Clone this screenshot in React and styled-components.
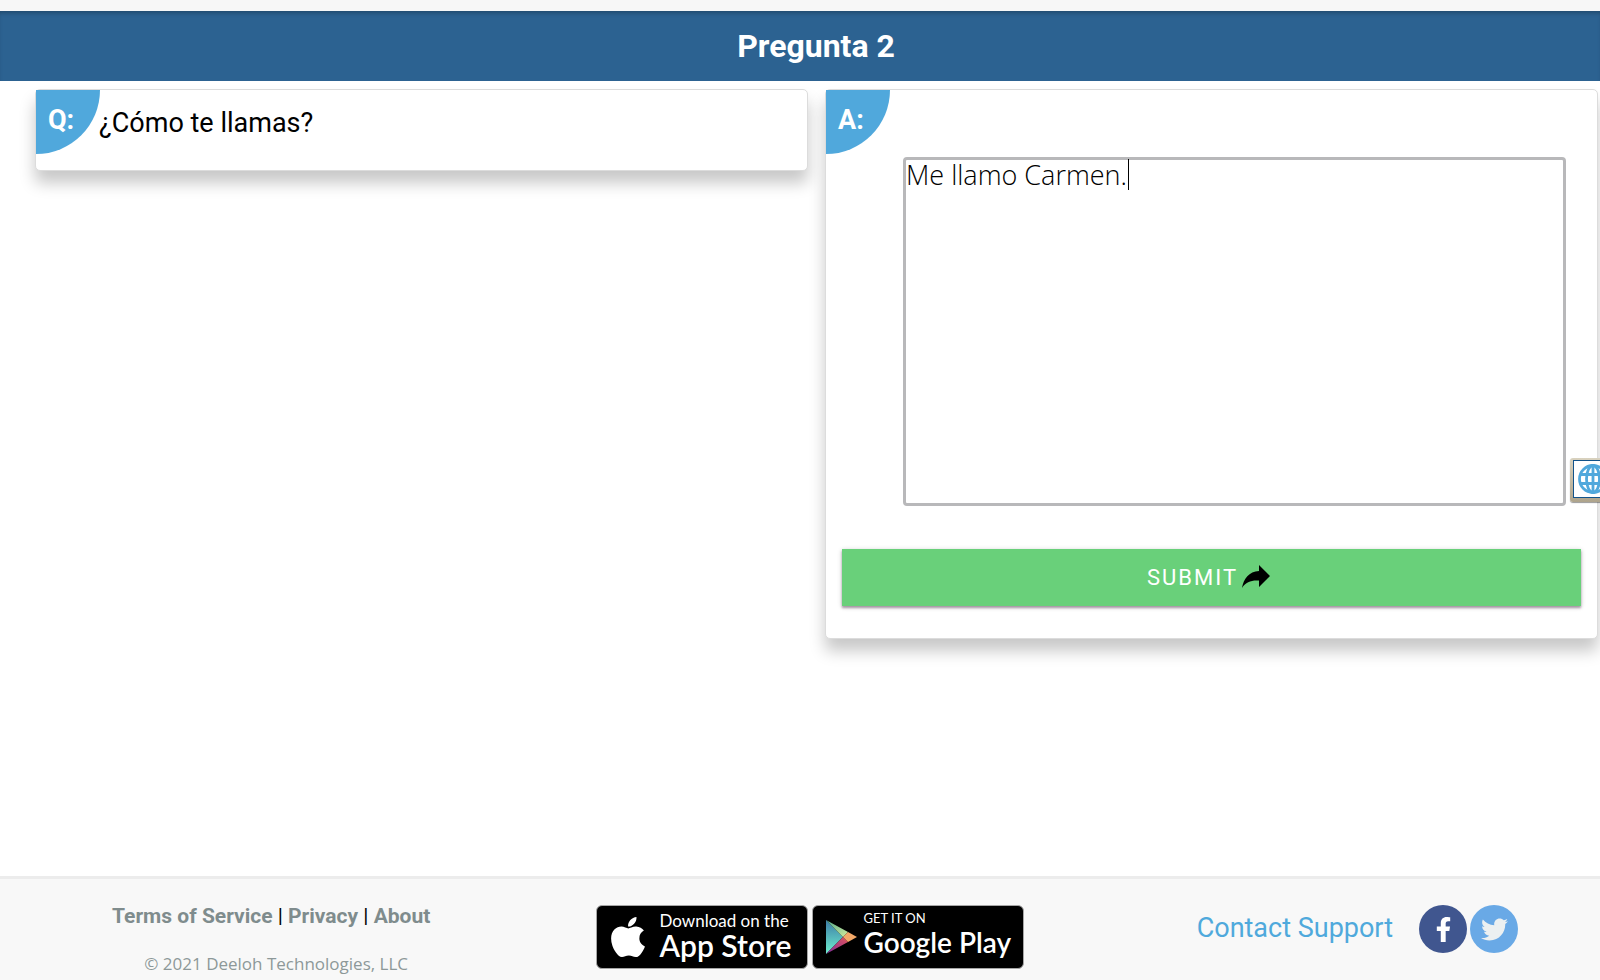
import { useCallback, useState } from 'react'
import styled, { createGlobalStyle } from 'styled-components'
import { FaApple, FaFacebookF, FaTwitter } from 'react-icons/fa'

const GlobalStyle = createGlobalStyle`
  * {
    box-sizing: border-box;
  }

  body {
    margin: 0;
    background: #fff;
    color: #000;
    font-family: Roboto, sans-serif;
    overflow-x: hidden;
  }
`

const Page = styled.div`
  display: flex;
  flex-direction: column;
  min-height: 100vh;
  overflow-x: hidden;
`

const TopStrip = styled.div`
  height: 11px;
  background: #f7f7f7;
`

const Header = styled.header`
  padding: 17px 0 17px 32px;
  background: #2c6291;
  box-shadow: inset 0 4px 4px -2px rgba(0, 0, 0, 0.25);
`

const Title = styled.h1`
  margin: 0;
  color: #fff;
  font-size: 32px;
  line-height: 36px;
  font-weight: 700;
  text-align: center;
`

const Main = styled.main`
  flex: 1;
  display: grid;
  grid-template-columns: 1fr 1fr;
  align-items: start;
  gap: 17px;
  padding: 8px 2px 32px 35px;
`

const Card = styled.section`
  position: relative;
  min-height: 82px;
  border: 1px solid #dcdcdc;
  border-radius: 5px;
  background: #fff;
  box-shadow: 0 12px 16px rgba(0, 0, 0, 0.22);
`

const Corner = styled.div`
  position: absolute;
  top: 0;
  left: 0;
  width: 64px;
  height: 64px;
  padding: 13px 0 0 12px;
  border-bottom-right-radius: 100%;
  background: #50a8dc;
  color: #fff;
  font-size: 27px;
  line-height: 34px;
  font-weight: 700;
`

const Question = styled.p`
  margin: 0;
  padding: 17px 16px 16px 63px;
  font-size: 27px;
  line-height: 32px;
`

const AnswerForm = styled.form`
  padding: 67px 16px 32px;
`

const AnswerField = styled.div`
  position: relative;
  margin: 0 15px 43px 61px;
`

const AnswerInput = styled.textarea`
  display: block;
  width: 100%;
  height: 349px;
  padding: 0;
  border: 3px solid #b8b8ba;
  border-radius: 4px;
  outline: none;
  resize: none;
  background: #fff;
  color: #000;
  font-family: 'Open Sans', sans-serif;
  font-size: 27px;
  line-height: 29px;
  font-weight: 300;
`

const Caret = styled.span`
  position: absolute;
  top: 2px;
  left: 225px;
  width: 1px;
  height: 31px;
  background: #000;
`

const LanguageButton = styled.button`
  position: absolute;
  right: -50px;
  bottom: 4px;
  display: flex;
  align-items: center;
  justify-content: center;
  width: 46px;
  height: 44px;
  padding: 0 0 3px;
  border: 0;
  border-radius: 3px;
  background: linear-gradient(#d9d2bf, #aea48c);
  box-shadow: 0 1px 1px rgba(0, 0, 0, 0.4);
`

const LanguageFace = styled.span`
  display: flex;
  align-items: center;
  justify-content: center;
  width: 40px;
  height: 38px;
  border: 1px solid #12538a;
  background: #fff;
`

const SubmitButton = styled.button`
  display: flex;
  align-items: center;
  justify-content: center;
  gap: 4px;
  width: 100%;
  height: 57px;
  padding: 0 6px 0 0;
  border: 0;
  background: #69d07a;
  box-shadow: 0 2px 2px rgba(110, 80, 105, 0.5), 0 1px 5px rgba(0, 0, 0, 0.2);
  color: #fff;
  font-family: Roboto, sans-serif;
  font-size: 22px;
  letter-spacing: 2px;
`

const Footer = styled.footer`
  display: flex;
  align-items: flex-start;
  justify-content: space-between;
  padding: 26px 82px 4px 112px;
  border-top: 3px solid #ececec;
  background: #f8f8f8;
`

const Legal = styled.div`
  text-align: center;
  font-size: 21px;
  line-height: 22px;
`

const LegalLink = styled.a`
  color: #7f8c8d;
  font-weight: 700;
  text-decoration: none;
`

const Copyright = styled.p`
  margin: 25px 0 0;
  padding-left: 10px;
  color: #8d9899;
  font-family: 'Open Sans', sans-serif;
  font-size: 17px;
  line-height: 24px;
`

const Stores = styled.div`
  display: flex;
  gap: 4px;
  margin-right: 6px;
`

const StoreLink = styled.a`
  display: flex;
  align-items: center;
  gap: ${({ $gap }) => $gap}px;
  width: 212px;
  height: 64px;
  padding-left: 8px;
  border: 1px solid #a6a6a6;
  border-radius: 6px;
  background: #000;
  color: #fff;
  font-family: Lato, sans-serif;
  text-decoration: none;
  white-space: nowrap;
`

const StoreText = styled.span`
  display: flex;
  flex-direction: column;
  padding-bottom: ${({ $lift }) => $lift}px;
`

const StoreHint = styled.span`
  font-size: ${({ $size }) => $size}px;
  line-height: 18px;
`

const StoreName = styled.span`
  font-size: ${({ $size }) => $size}px;
  line-height: 30px;
  font-weight: 600;
`

const Contact = styled.div`
  display: flex;
  align-items: center;
  gap: 3px;
`

const ContactLink = styled.a`
  margin: 0 23px 3px 0;
  color: #4fa9dc;
  font-size: 27px;
  line-height: 36px;
  text-decoration: none;
`

const SocialLink = styled.a`
  display: flex;
  align-items: center;
  justify-content: center;
  width: 48px;
  height: 48px;
  border-radius: 50%;
  background: ${({ $color }) => $color};
  color: ${({ $ink }) => $ink};
`

const ShareIcon = () => (
  <svg width="28" height="26" viewBox="0 0 28 26" aria-hidden="true">
    <path d="M17 0 L28 11 L17 22 V15.500 C9.500 15 4 16.500 0 23 C1.500 14 7 6.500 17 6 Z" />
  </svg>
)

const GlobeIcon = () => (
  <svg
    width="30"
    height="30"
    viewBox="0 0 30 30"
    fill="none"
    stroke="#50a8dc"
    strokeWidth="2.8"
    aria-hidden="true"
  >
    <circle cx="15" cy="15" r="13.500" />
    <ellipse cx="15" cy="15" rx="6.500" ry="13.500" />
    <path d="M15 1.500 V28.500 M3 10.500 H27 M3 19.500 H27" />
  </svg>
)

const PlayIcon = () => (
  <svg width="37" height="36" viewBox="-4 0 37 36" aria-hidden="true">
    <defs>
      <linearGradient id="playBlue" x1="0" y1="0" x2="0" y2="1">
        <stop offset="0" stopColor="#3c7ba6" />
        <stop offset="1" stopColor="#6ff0cf" />
      </linearGradient>
      <linearGradient id="playGreen" x1="0" y1="0" x2="1" y2="1">
        <stop offset="0" stopColor="#4fa98b" />
        <stop offset="1" stopColor="#d3ec9c" />
      </linearGradient>
      <linearGradient id="playRed" x1="0" y1="1" x2="1" y2="0">
        <stop offset="0" stopColor="#7a2a9c" />
        <stop offset="1" stopColor="#e2545c" />
      </linearGradient>
    </defs>
    <path d="M1 1 L18 18 L1 35 Z" fill="url(#playBlue)" />
    <path d="M1 1 L23 13 L18 18 Z" fill="url(#playGreen)" />
    <path d="M1 35 L18 18 L23 23 Z" fill="url(#playRed)" />
    <path d="M23 13 L32 18 L23 23 L18 18 Z" fill="#f3a868" />
  </svg>
)

const App = () => {
  const [answer, setAnswer] = useState('Me llamo Carmen.')

  const handleChange = useCallback((event) => {
    setAnswer(event.target.value)
  }, [])

  const handleSubmit = useCallback((event) => {
    event.preventDefault()
  }, [])

  return (
    <Page>
      <GlobalStyle />
      <TopStrip />
      <Header>
        <Title>Pregunta 2</Title>
      </Header>
      <Main>
        <Card>
          <Corner>Q:</Corner>
          <Question>¿Cómo te llamas?</Question>
        </Card>
        <Card>
          <Corner as="label" htmlFor="answer">
            A:
          </Corner>
          <AnswerForm onSubmit={handleSubmit}>
            <AnswerField>
              <AnswerInput
                id="answer"
                value={answer}
                onChange={handleChange}
                spellCheck={false}
              />
              <Caret />
              <LanguageButton type="button" aria-label="Idioma">
                <LanguageFace>
                  <GlobeIcon />
                </LanguageFace>
              </LanguageButton>
            </AnswerField>
            <SubmitButton type="submit">
              SUBMIT
              <ShareIcon />
            </SubmitButton>
          </AnswerForm>
        </Card>
      </Main>
      <Footer>
        <Legal>
          <LegalLink href="#terms">Terms of Service</LegalLink> |{' '}
          <LegalLink href="#privacy">Privacy</LegalLink> |{' '}
          <LegalLink href="#about">About</LegalLink>
          <Copyright>© 2021 Deeloh Technologies, LLC</Copyright>
        </Legal>
        <Stores>
          <StoreLink href="#app-store" $gap={8}>
            <FaApple size={46} />
            <StoreText $lift={2}>
              <StoreHint $size={17}>Download on the</StoreHint>
              <StoreName $size={30}>App Store</StoreName>
            </StoreText>
          </StoreLink>
          <StoreLink href="#google-play" $gap={5}>
            <PlayIcon />
            <StoreText $lift={9}>
              <StoreHint $size={13}>GET IT ON</StoreHint>
              <StoreName $size={28}>Google Play</StoreName>
            </StoreText>
          </StoreLink>
        </Stores>
        <Contact>
          <ContactLink href="#contact">Contact Support</ContactLink>
          <SocialLink
            href="#facebook"
            aria-label="Facebook"
            $color="#40568f"
            $ink="#fff"
          >
            <FaFacebookF size={25} />
          </SocialLink>
          <SocialLink
            href="#twitter"
            aria-label="Twitter"
            $color="#69a9e6"
            $ink="#ecf0f1"
          >
            <FaTwitter size={27} />
          </SocialLink>
        </Contact>
      </Footer>
    </Page>
  )
}

export default App
